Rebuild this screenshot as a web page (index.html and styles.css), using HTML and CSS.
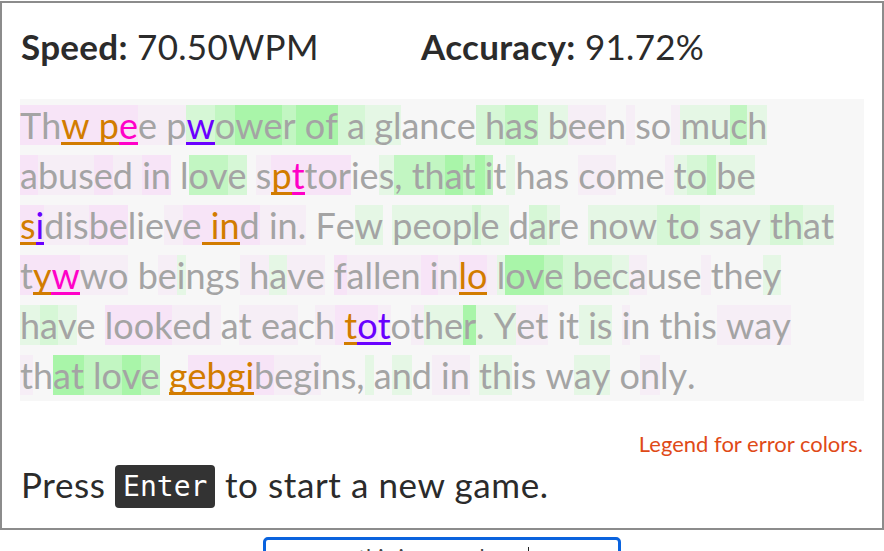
FILE: index.html
```html
<!DOCTYPE html>
<html lang="en">
<head>
<meta charset="utf-8">
<title>Typing game</title>
<link rel="stylesheet" href="styles.css">
</head>
<body>
<main class="game">
  <div class="stats">
    <div class="stat"><b>Speed:</b> 70.50WPM</div>
    <div class="stat"><b>Accuracy:</b> 91.72%</div>
  </div>
  <div class="passage" id="passage"></div>
  <p class="legend">Legend for error colors.</p>
  <p class="restart">Press <kbd class="key">Enter</kbd> to start a new game.</p>
</main>
<div class="entry">
  <div class="entry-box"><span class="entry-text">this is a word</span><span class="caret"></span></div>
</div>
<script src="script.js"></script>
</body>
</html>
```
FILE: styles.css
```css
html, body { margin: 0; padding: 0; background: #fff; }
body { font-family: Lato, "Noto Sans", sans-serif; color: #2b2b2b; overflow: hidden; }

.game {
  margin-top: 1px;
  border: 2px solid #8c8c8c;
  padding: 23px 18px 20px;
}

.stats { display: grid; grid-template-columns: 400px 1fr; font-size: 35px; line-height: 41px; padding-left: 1px; letter-spacing: 0.3px; }
.stat b { font-weight: 700; }

.passage {
  margin-top: 32px;
  padding: 1px 0;
  background: #f7f7f7;
  font-size: 36px;
  line-height: 50px;
  color: #a4a4a4;
}
.line { white-space: pre; height: 50px; }
.ch { display: inline-block; line-height: 40px; vertical-align: baseline; }

.bg-a { background: #f6eef6; }
.bg-b { background: #f7e4f7; }
.bg-1 { background: #e5f7e5; }
.bg-2 { background: #d6f7d6; }
.bg-3 { background: #c2f6c2; }
.bg-4 { background: #a9f5a9; }

.fg-o { color: #d27c00; box-shadow: inset 0 -3px 0 #d27c00; }
.fg-m { color: #ff00c8; box-shadow: inset 0 -3px 0 #ff00c8; }
.fg-v { color: #6a00ff; box-shadow: inset 0 -3px 0 #6a00ff; }

.legend {
  margin: 31px 0 0;
  text-align: right;
  font-size: 22px;
  line-height: 23px;
  color: #df4a17;
  padding-right: 1px;
}

.restart {
  margin: 8px 0 0;
  font-size: 35px;
  line-height: 43px;
  letter-spacing: 0.6px;
  padding-left: 1px;
}
.key {
  display: inline-block;
  background: #333;
  color: #fff;
  font-family: "DejaVu Sans Mono", monospace;
  font-size: 28px;
  letter-spacing: 0;
  line-height: 43px;
  padding: 0 8px;
  border-radius: 4px;
  vertical-align: 2px;
}

.entry { display: flex; justify-content: center; margin-top: 7px; }
.entry-box {
  width: 260px;
  height: 45px;
  border: 3px solid #0a63de;
  border-radius: 5px;
  display: flex;
  justify-content: flex-start;
  align-items: flex-start;
  padding: 3px 0 0 92px;
  font-size: 22px;
  color: #444;
  box-sizing: content-box;
}
.caret { display: inline-block; width: 1px; height: 26px; background: #222; margin: 4px 0 0 43px; }
```
FILE: script.js
```js
(function () {
  var lines = [
    ["Thw pee pwower of a glance has been so much",
     "bbbbbbaaa2344344422111....223311aa.a..a1131",
     "..ooom...v"],
    ["abused in love spttories, that it has come to be",
     "baaabaabb..332.abbbbb..133334343.1....aa..a12311",
     "................om"],
    ["sidisbelieve ind in. Few people dare now to say that",
     "bbaaabb...abbbbbaaaa...1.1111211.21..111222111112211",
     "ov..........ooo"],
    ["tywwo beings have fallen inlo love because they",
     "bbbaa..a1...aa1aa.baaaaabbabba14432221a...a...1",
     ".om........................oo"],
    ["have looked at each totother. Yet it is in this way",
     "121..bbbbaaa.aaaa.abbba.a114111aa...111.a......aaaa",
     "....................ovv"],
    ["that love gebgibegins, and in this way only.",
     "a.4433343..bbbbbaaa...1.1.aaa.11....11..a...",
     "..........ooooo"]
  ];
  var root = document.getElementById("passage");
  lines.forEach(function (l) {
    var div = document.createElement("div");
    div.className = "line";
    for (var i = 0; i < l[0].length; i++) {
      var s = document.createElement("span");
      var cls = "ch";
      var b = l[1].charAt(i);
      var f = l[2].charAt(i);
      if (b && b !== ".") cls += " bg-" + b;
      if (f && f !== ".") cls += " fg-" + f;
      s.className = cls;
      s.textContent = l[0].charAt(i);
      div.appendChild(s);
    }
    root.appendChild(div);
  });
})();
```
